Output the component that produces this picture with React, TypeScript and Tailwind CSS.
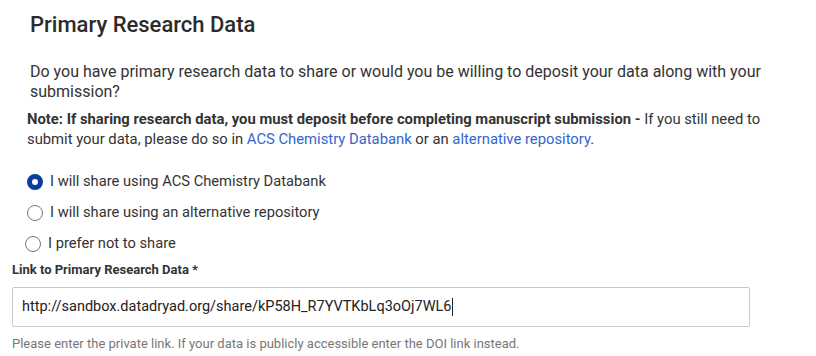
import React from "react";

function Radio({ checked, label }: { checked?: boolean; label: string }) {
  return (
    <label className="flex items-center gap-[7px] h-[31px]">
      {checked ? (
        <span className="w-[16px] h-[16px] shrink-0 rounded-full border-[5px] border-[#0b3d9c] bg-white box-border" />
      ) : (
        <span className="w-[16px] h-[16px] shrink-0 rounded-full border border-[#777] bg-white box-border" />
      )}
      <span>{label}</span>
    </label>
  );
}

export default function App() {
  return (
    <div
      className="w-[816px] h-[356px] bg-white text-[#333] overflow-hidden"
      style={{ fontFamily: "Roboto, 'Liberation Sans', sans-serif" }}
    >
      <div className="pl-[30px] pt-[11px]">
        <h1 className="text-[22px] leading-[28px] font-medium text-[#2b2b2b]">Primary Research Data</h1>
      </div>
      <p className="pl-[30px] w-[780px] mt-[23px] text-[16px] leading-[20px]">
        Do you have primary research data to share or would you be willing to deposit your data along with your submission?
      </p>
      <p className="pl-[27px] w-[790px] mt-[7px] text-[14.8px] leading-[20px]">
        <span className="font-bold">
          Note: If sharing research data, you must deposit before completing manuscript submission -
        </span>{" "}
        If you still need to submit your data, please do so in{" "}
        <a className="text-[#3366cc]">ACS Chemistry Databank</a> or an{" "}
        <a className="text-[#3366cc]">alternative repository</a>.
      </p>
      <div className="pl-[27px] mt-[17px] text-[14.7px] flex flex-col">
        <Radio checked label="I will share using ACS Chemistry Databank" />
        <Radio label="I will share using an alternative repository" />
        <div className="-ml-[2px]">
          <Radio label="I prefer not to share" />
        </div>
      </div>
      <div className="pl-[12px] mt-[2px] text-[13px] font-bold leading-[18px]">
        Link to Primary Research Data *
      </div>
      <div className="pl-[12px] mt-[8px]">
        <div className="w-[738px] h-[40px] border border-[#c8c8c8] rounded-[2px] flex items-center pl-[9px] text-[14.5px] text-[#222]">
          http://sandbox.datadryad.org/share/kP58H_R7YVTKbLq3oOj7WL6
          <span className="inline-block w-[1px] h-[18px] bg-[#222]" />
        </div>
      </div>
      <div className="pl-[12px] mt-[8px] text-[13px] text-[#777] leading-[18px]">
        Please enter the private link. If your data is publicly accessible enter the DOI link instead.
      </div>
    </div>
  );
}
